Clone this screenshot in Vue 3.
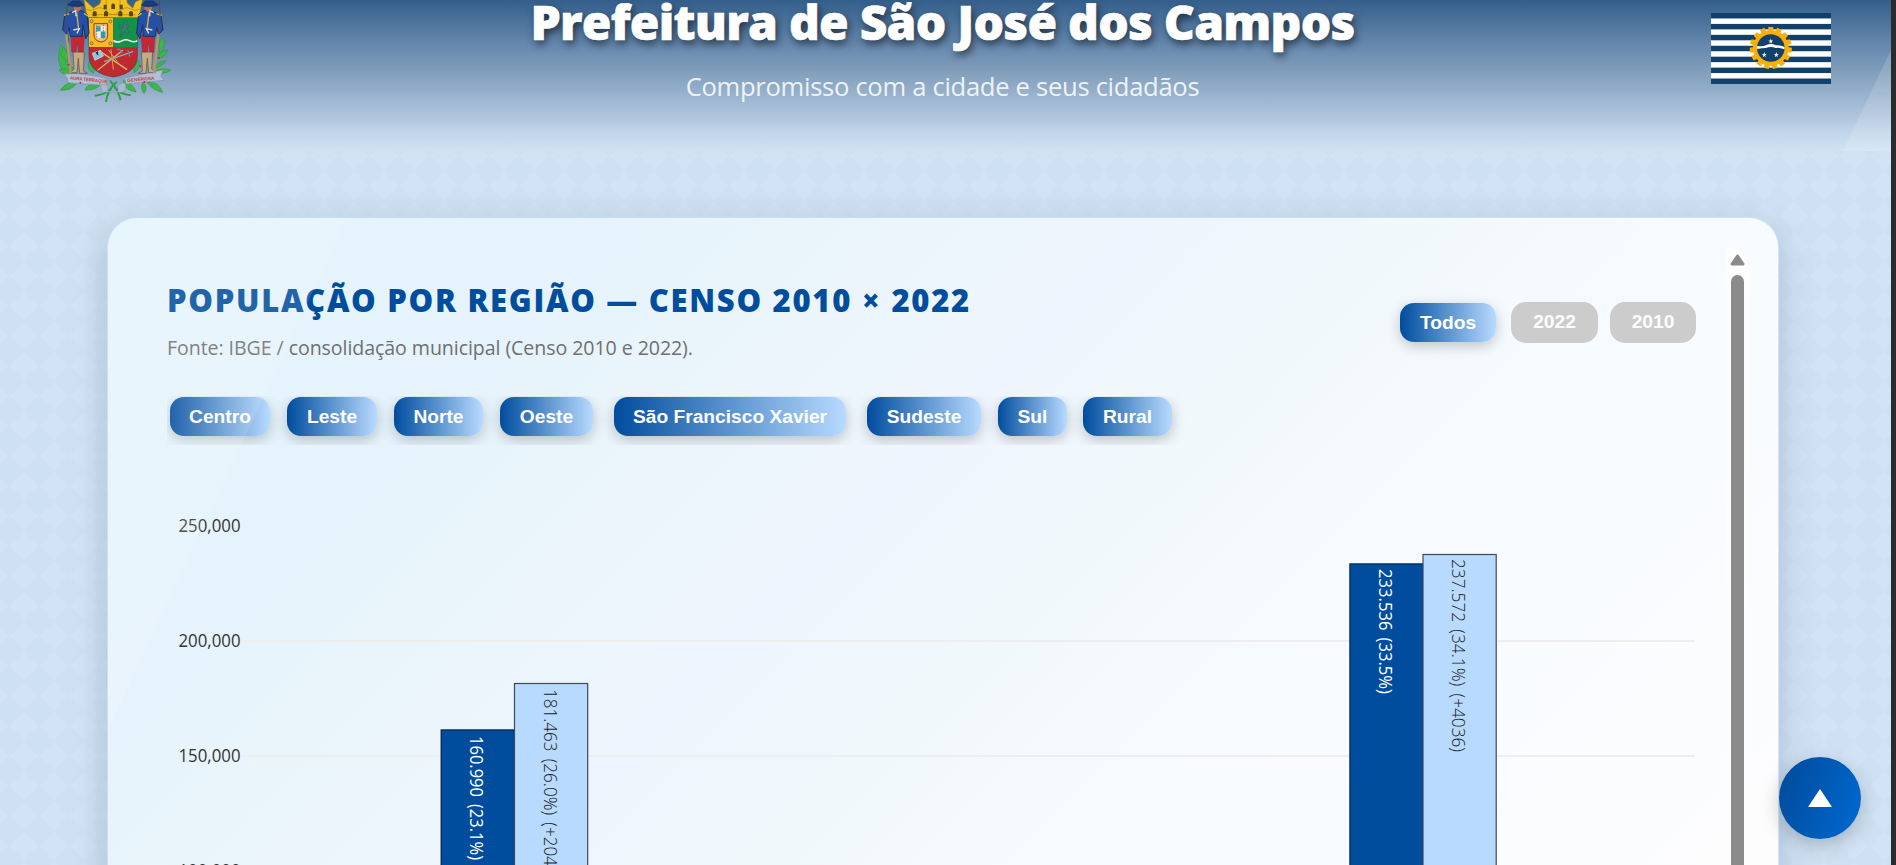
<script setup>
const regions = [
  { name: 'Centro', cls: 'w-centro' },
  { name: 'Leste', cls: 'w-leste' },
  { name: 'Norte', cls: 'w-norte' },
  { name: 'Oeste', cls: 'w-oeste' },
  { name: 'São Francisco Xavier', cls: 'w-sfx' },
  { name: 'Sudeste', cls: 'w-sudeste' },
  { name: 'Sul', cls: 'w-sul' },
  { name: 'Rural', cls: 'w-rural' }
]
const ticks = [
  { label: '250,000', y: 56, line: false },
  { label: '200,000', y: 171, line: true },
  { label: '150,000', y: 286, line: true },
  { label: '100,000', y: 401, line: true }
]
const bars = [
  { x: 274.3, y: 260, dark: true, text: '160.990 (23.1%)', len: 124, ty: 266 },
  { x: 347.5, y: 213.5, dark: false, text: '181.463 (26.0%) (+20473)', len: 201, ty: 219 },
  { x: 1183, y: 94, dark: true, text: '233.536 (33.5%)', len: 125, ty: 99 },
  { x: 1256, y: 84.5, dark: false, text: '237.572 (34.1%) (+4036)', len: 193, ty: 89 }
]
const teeth = Array.from({ length: 15 }, (_, i) => i * 24)
const stripes = [0, 1, 2, 3, 4, 5, 6]
</script>

<template>
  <div class="window">
    <div class="page">
      <svg class="pattern" width="1891" height="865">
        <defs>
          <pattern id="diamonds" x="9" y="21" width="30" height="30" patternUnits="userSpaceOnUse">
            <path d="M15 .8 L29 15 L15 29.2 L1 15Z" fill="#d1e3f5" />
          </pattern>
        </defs>
        <rect width="1891" height="865" fill="url(#diamonds)" />
      </svg>

      <header class="header">
        <svg class="coat" viewBox="0 0 450 330" width="150" height="110">
          <g stroke="#2b9a3f" stroke-width="2" fill="#3fb450">
            <path d="M72 215 Q45 190 62 135 Q87 150 77 190 L102 205 Q75 215 72 215Z" />
            <path d="M57 210 Q70 232 112 222 Q90 200 57 210Z" />
            <path d="M62 165 L85 190 L78 125 L88 168 L70 140Z" />
            <path d="M150 180 Q135 205 160 220 Q172 200 150 180Z" />
            <path d="M295 178 Q278 203 282 218 Q305 205 295 178Z" />
            <path d="M366 112 Q383 135 360 160 Q350 135 366 112Z" />
            <path d="M383 150 Q375 175 352 176 Q358 150 383 150Z" />
            <path d="M378 182 Q365 202 340 205 Q350 185 378 182Z" />
            <path d="M393 210 Q375 225 340 217 Q360 200 393 210Z" />
            <path d="M60 270 Q85 240 112 248 Q95 274 60 270Z" />
            <path d="M135 270 Q145 245 185 250 Q170 272 135 270Z" />
            <path d="M368 277 Q335 270 322 247 Q355 242 368 277Z" />
            <path d="M250 242 Q282 252 288 276 Q255 272 250 242Z" />
            <path d="M312 280 Q300 265 308 246 Q327 262 312 280Z" />
          </g>
          <g fill="none" stroke="#2f9f46" stroke-width="6">
            <path d="M198 306 Q202 270 230 245" /><path d="M242 301 Q235 270 210 242" />
            <path d="M164 287 Q195 285 214 266" /><path d="M272 286 Q240 282 224 262" />
          </g>
          <path d="M72 222 Q135 218 201 236 L200 256 Q130 252 84 248 L82 234Z" fill="#b1c0d4" stroke="#7787a0" stroke-width="1.5" />
          <path d="M254 234 Q310 222 369 210 L362 228 L372 241 Q310 246 258 252Z" fill="#b1c0d4" stroke="#7787a0" stroke-width="1.5" />
          <path d="M184 253 Q180 276 193 277 H248 Q263 266 254 248 L234 254 V274 H203 V256Z" fill="#a9bbd1" stroke="#7787a0" />
          <text x="90" y="238" class="motto" transform="rotate(6 90 238)" textLength="112" lengthAdjust="spacingAndGlyphs">AURA TERRAQUE</text>
          <text x="262" y="246" class="motto" transform="rotate(-5 262 246)" textLength="82" lengthAdjust="spacingAndGlyphs">GENEROSA</text>
          <path d="M131 -4 L141 53 H298 L308 -4 L286 5 L278 24 L262 9 L260 -4 H184 L179 12 L160 24Z" fill="#f1c022" stroke="#8a6c17" stroke-width="2" />
          <path d="M138 28 Q155 35 169 26 T201 35 T238 35 T270 26 T302 28 M155 44 H287 M199 0 V34 M240 0 V34" fill="none" stroke="#a98218" stroke-width="2" />
          <path d="M158 49 V37 Q164 29 170 37 V49Z M192 49 V37 Q198 29 204 37 V49Z M235 49 V37 Q241 29 247 37 V49Z M267 49 V37 Q273 29 279 37 V49Z M214 27 V14 Q219 7 225 14 V27Z M191 14 h9 v14 h-9Z M239 14 h9 v14 h-9Z" fill="#594619" />
          <path d="M147 55 H292 V165 Q292 220 220 231 Q147 220 147 165Z" fill="#be2a2d" stroke="#573035" stroke-width="2" />
          <path d="M147 54 H219 V141 H147Z" fill="#f3bd1b" />
          <path d="M220 54 H292 V142 H220Z" fill="#159249" />
          <path d="M220 119 Q235 126 246 120 T270 120 T292 119 V125 Q278 130 268 124 T245 125 T220 125Z" fill="#edf5ee" />
          <path d="M162 71 H203 V105 Q203 123 183 126 Q162 122 162 105Z" fill="#e8c56e" stroke="#bd2524" stroke-width="3" />
          <path d="M169 79 h12 v14 h-12Z M183 95 h13 v19 h-13Z" fill="#259fce" />
          <path d="M183 78 h13 v15 h-13Z M169 95 h12 v18 h-12Z" fill="#f5efdf" />
          <path d="M170 76 V113 M190 74 V116" stroke="#2a83b2" stroke-width="3" stroke-dasharray="4 4" />
          <g fill="#d8b878" stroke="#694a37" stroke-width="2"><circle cx="155" cy="64" r="4.5" /><circle cx="211" cy="64" r="4.5" /><circle cx="155" cy="130" r="4.5" /><circle cx="211" cy="130" r="4.5" /></g>
          <path d="M255 61 L263 65 L260 75 L268 77 L259 84 L267 98 L262 105 L255 93 L247 102 L243 113 L239 110 L245 92 L249 80 L237 85 L235 75 L250 76Z" fill="#347f70" stroke="#28675c" stroke-width="2" />
          <path d="M157 160 L182 151 L190 168 L165 181Z" fill="#8dc6e5" stroke="#d9ecf4" stroke-width="2" />
          <path d="M166 158 l8 -5 l1 15Z" fill="#18344b" />
          <g fill="none" stroke-linecap="round">
            <path d="M185 157 L260 208 M174 210 L248 151" stroke="#d8b76d" stroke-width="4" />
            <path d="M194 184 L278 155" stroke="#8aabc2" stroke-width="4" />
            <path d="M213 149 L220 208 M206 151 L231 184" stroke="#d7a153" stroke-width="3" />
            <path d="M232 149 Q242 144 245 158 M264 152 L269 168" stroke="#6d87ab" stroke-width="4" />
          </g>
          <g id="guard">
            <path d="M99 156 H133 L130 213 L142 220 H119 L115 175 L111 218 H91 L102 207Z" fill="#c7ab80" stroke="#554d48" stroke-width="2" />
            <path d="M93 105 H133 L130 156 H115 L112 127 L108 156 H95Z" fill="#c92532" stroke="#722834" />
            <path d="M84 40 L107 31 L127 33 L141 43 L147 99 L137 116 L129 74 L127 109 H91 L87 83 L81 103 L68 90 L74 47Z" fill="#2450a8" stroke="#18306c" stroke-width="3" />
            <path d="M110 38 L116 88 M72 46 L88 41 M132 40 L144 48" stroke="#e0b13a" stroke-width="4" />
            <path d="M99 12 H124 V27 L114 36 L101 27Z" fill="#bc7154" />
            <path d="M82 14 Q95 6 97 3 H121 Q124 11 132 15 Q113 26 82 14Z" fill="#173b83" stroke="#152857" stroke-width="2" />
            <path d="M96 38 L107 32 L108 49 M100 90 L118 86 L111 100" fill="none" stroke="#e3dac9" stroke-width="4" />
          </g>
          <use href="#guard" transform="translate(437 0) scale(-1 1)" />
          <path d="M85 -5 L77 61 L87 130" fill="none" stroke="#5b4c4d" stroke-width="3" />
          <path d="M358 -5 L361 74 L352 130" fill="none" stroke="#5b4c4d" stroke-width="3" />
          <path d="M79 103 L92 219" stroke="#ba9665" stroke-width="7" />
          <path d="M355 103 L342 219" stroke="#ba9665" stroke-width="7" />
          <g fill="#ce2532"><circle cx="86" cy="194" r="3" /><circle cx="121" cy="248" r="3" /><circle cx="313" cy="246" r="3" /><circle cx="357" cy="174" r="3" /><circle cx="301" cy="199" r="3" /></g>
        </svg>

        <div class="titles">
          <h1><span>Prefeitura de São José dos Campos</span></h1>
          <p>Compromisso com a cidade e seus cidadãos</p>
        </div>

        <svg class="flag" viewBox="0 0 120 71" width="120" height="71">
          <rect width="120" height="71" fill="#fff" />
          <rect v-for="s in stripes" :key="s" x="0" :y="s * 10.92" width="120" height="5.46" fill="#11416a" />
          <g transform="translate(59.8 35)">
            <path v-for="a in teeth" :key="a" d="M-2.9 -15 L-2.4 -21 H2.4 L2.9 -15Z" fill="#f8b009" :transform="`rotate(${a})`" />
            <circle r="17.8" fill="#f8b009" />
            <circle r="13.8" fill="#11416a" />
            <path d="M-13.7 -2 Q-8 -1 -5 -2.8 Q0 -5 5 -2.8 Q9 -3 13.7 -1 V1.2 Q8 -1 5 0 Q0 -2 -5 0 Q-9 0 -13.7 1Z" fill="#fff" />
            <path id="star" d="M0 -9.6 L.7 -7.6 L2.5 -7.6 L1 -6.3 L1.5 -4.4 L0 -5.5 L-1.5 -4.4 L-1 -6.3 L-2.5 -7.6 L-.7 -7.6Z" fill="#e8f0f6" />
            <use href="#star" x="-6.5" y="13.6" /><use href="#star" x="5.5" y="13.6" />
          </g>
        </svg>
      </header>

      <main class="card">
        <div class="content">
          <div class="top">
            <div class="headings">
              <h2><span>POPULAÇÃO POR REGIÃO — CENSO 2010 × 2022</span></h2>
              <p>Fonte: IBGE / consolidação municipal (Censo 2010 e 2022).</p>
            </div>
            <div class="years">
              <button class="pill todos">Todos</button>
              <button class="off">2022</button>
              <button class="off last">2010</button>
            </div>
          </div>
          <div class="regions">
            <button v-for="r in regions" :key="r.name" class="pill" :class="r.cls">{{ r.name }}</button>
          </div>
          <svg class="chart" width="1529" height="395">
            <g v-for="t in ticks" :key="t.label">
              <line v-if="t.line" x1="75" x2="1528" :y1="t.y" :y2="t.y" stroke="#eeeeee" stroke-width="2" />
              <text class="tick" x="11.5" :y="t.y + 6" textLength="62" lengthAdjust="spacingAndGlyphs">{{ t.label }}</text>
            </g>
            <g v-for="b in bars" :key="b.text">
              <rect :x="b.x" :y="b.y" width="73.2" height="420" :class="b.dark ? 'bar-dark' : 'bar-light'" />
              <text :class="b.dark ? 'val-dark' : 'val-light'" :transform="`translate(${b.x + 29} ${b.ty}) rotate(90)`" :textLength="b.len" lengthAdjust="spacingAndGlyphs">{{ b.text }}</text>
            </g>
          </svg>
        </div>
        <div class="scroll">
          <svg width="23" height="27"><path d="M11.5 8 L17 16 H6Z" fill="#8b8b8b" stroke="#8b8b8b" stroke-width="3" stroke-linejoin="round" /></svg>
          <div class="thumb"></div>
        </div>
      </main>

      <div class="sheen-header"></div>
      <div class="sheen-card"></div>
      <button class="to-top"><svg width="24" height="18"><path d="M12 0 L24 18 H0Z" fill="#fff" /></svg></button>
    </div>
    <div class="edge"></div>
  </div>
</template>

<style>
body { margin: 0; overflow: hidden; }
</style>
<style scoped>
.window { display: flex; width: 1896px; height: 865px; overflow: hidden; font-family: "Open Sans", "Noto Sans", sans-serif; }
.page { position: relative; width: 1891px; height: 865px; overflow: hidden; background: #cee1f2; }
.edge { width: 5px; background: #2b2b2b; }
.pattern { position: absolute; inset: 0; }
.header { position: relative; display: flex; box-sizing: border-box; width: 1891px; height: 151px; padding: 0 60px 0 40px; justify-content: space-between; background: linear-gradient(180deg, #345f8b 0, #6789af 46px, #7e9cba 69px, #b1c6de 118px, #c1d5ea 132px, #d0e3f3 151px); }
.coat { display: block; }
.flag { display: block; margin-top: 13px; }
.motto { font: bold 14px "Liberation Sans", sans-serif; fill: #ca3946; }
.titles { text-align: center; width: 900px; margin-left: -16px; }
h1, h2, p { margin: 0; white-space: nowrap; }
h1 { height: 66px; margin-top: -11px; line-height: 66px; font-size: 48px; font-weight: 800; color: #fff; text-shadow: 2px 4px 8px rgba(0,0,0,.6); letter-spacing: -.75px; -webkit-text-stroke: .6px #fff; }
.titles p { font-size: 25.6px; line-height: 36px; color: rgba(255,255,255,.87); margin-top: 14px; letter-spacing: -.3px; }
.card { position: relative; display: flex; width: 1672px; height: 680px; box-sizing: border-box; margin: 66px 0 0 107px; border: 1px solid rgba(140,180,225,.35); border-radius: 30px; background: linear-gradient(135deg, #e4f4fc 0, #e6f3fc 22%, #eaf5fb 31%, #eff5fe 45%, #f0f8fc 54%, #f7fbff 70%, #fdfdfe 97%) border-box; box-shadow: 0 10px 36px rgba(0,30,70,.18); }
.content { width: 1558px; padding-left: 59px; box-sizing: border-box; padding-top: 59px; }
.top { display: flex; justify-content: space-between; height: 119px; width: 1529px; }
h2 { height: 46px; line-height: 46px; font-size: 31px; font-weight: 800; color: #004d9e; letter-spacing: 1.7px; }
.headings p { font-size: 19.6px; line-height: 28px; color: #707070; margin-top: 11px; letter-spacing: -.08px; }
.years { display: flex; padding-top: 25px; align-items: flex-start; }
button { font: bold 19.2px/22px "Liberation Sans", sans-serif; border: 0; padding: 0; color: #fff; white-space: nowrap; }
.pill { height: 39px; border-radius: 14px; background: linear-gradient(90deg, #004d9e, #b8daff); box-shadow: 0 4px 14px rgba(0,0,0,.22); flex: none; }
.todos { width: 96px; margin: 1px 15px 0 0; }
.off { width: 87px; height: 41px; padding-bottom: 1px; border-radius: 15px; background: #ccc; margin-right: 12px; }
.last { width: 86px; margin-right: 0; }
.regions { display: flex; overflow: hidden; width: 1022px; height: 49px; padding: 1px 0 0 3px; box-sizing: border-box; }
.w-centro { width: 100px; margin-right: 17px; }
.w-leste { width: 90px; margin-right: 17px; }
.w-norte { width: 89px; margin-right: 17px; }
.w-oeste { width: 93px; margin-right: 21px; }
.w-sfx { width: 232px; margin-right: 21px; }
.w-sudeste { width: 114px; margin-right: 17px; }
.w-sul { width: 69px; margin-right: 16px; }
.w-rural { width: 89px; }
.chart { display: block; margin-top: 25px; font-family: "Open Sans", "Noto Sans", sans-serif; }
.tick { font-size: 17.6px; fill: #333; }
.bar-dark { fill: #004d9e; stroke: #003366; stroke-width: 1.5px; }
.bar-light { fill: #b8daff; stroke: #3d4b58; stroke-width: 1.2px; }
.val-dark { font-size: 18.6px; word-spacing: 3px; fill: #fff; }
.val-light { font-size: 18.6px; word-spacing: 3px; font-weight: 300; fill: #222; }
.scroll { width: 23px; height: 650px; margin: 30px 0 0 60px; border-radius: 0 20px 0 0; background: #fdfdfd; }
.scroll svg { display: block; }
.thumb { width: 13px; height: 640px; margin-left: 5px; border-radius: 7px; background: #8b8b8b; }
.sheen-header { position: absolute; left: 1843px; top: 50px; width: 48px; height: 101px; background: rgba(255,255,255,.15); clip-path: polygon(100% 0, 100% 100%, 0 100%); }
.sheen-card { position: absolute; left: 107px; top: 218px; width: 240px; height: 514px; background: rgba(255,255,255,.13); clip-path: polygon(0 0, 100% 0, 0 100%); border-radius: 30px 0 0 0; }
.to-top { position: absolute; left: 1779px; top: 757px; width: 82px; height: 82px; border-radius: 50%; background: linear-gradient(110deg, #004d9e 10%, #0066cc 90%); box-shadow: 0 6px 20px rgba(0,0,0,.22); display: flex; align-items: center; justify-content: center; }
</style>
